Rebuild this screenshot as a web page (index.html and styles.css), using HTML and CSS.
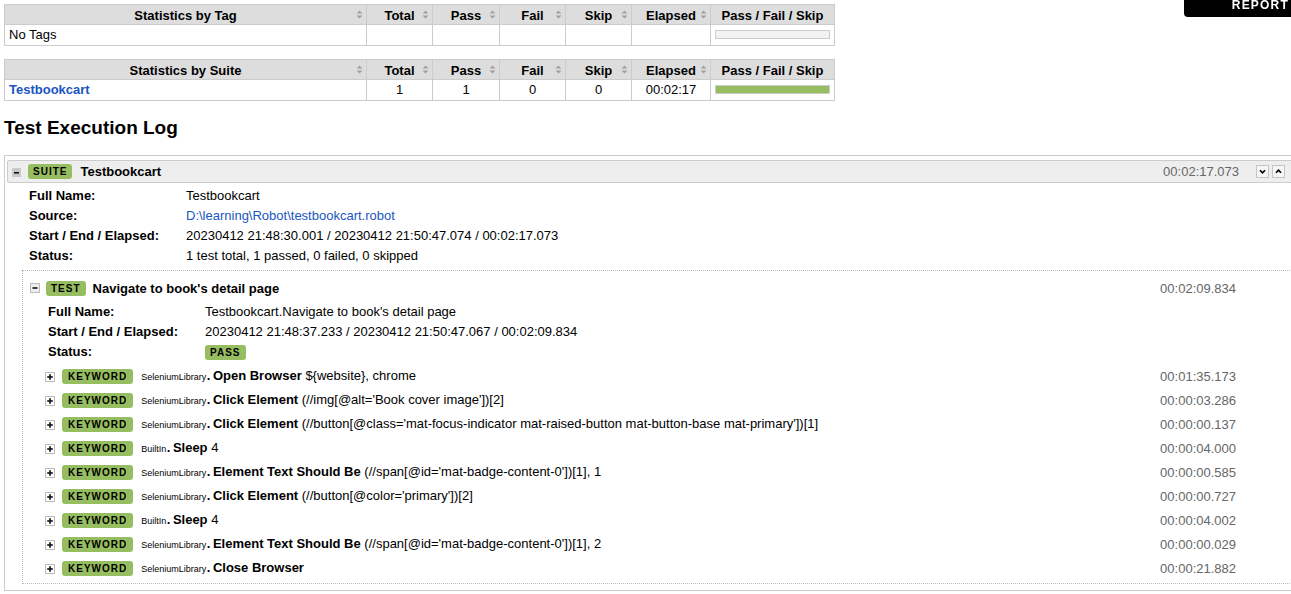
FILE: index.html
```html
<!DOCTYPE html>
<html>
<head>
<meta charset="utf-8">
<title>Testbookcart Log</title>
<link rel="stylesheet" href="styles.css">
</head>
<body>
<div class="report-link"><span>Report</span></div>

<table class="statistics">
  <colgroup>
    <col class="c-name"><col class="c-total"><col class="c-pass"><col class="c-fail"><col class="c-skip"><col class="c-elapsed"><col class="c-graph">
  </colgroup>
  <thead>
    <tr>
      <th>Statistics by Tag<svg class="sort" viewBox="0 0 7 9"><path d="M0.5 3.5L3.5 0.5L6.5 3.5Z M0.5 5.5H6.5L3.5 8.5Z"/></svg></th>
      <th>Total<svg class="sort" viewBox="0 0 7 9"><path d="M0.5 3.5L3.5 0.5L6.5 3.5Z M0.5 5.5H6.5L3.5 8.5Z"/></svg></th>
      <th>Pass<svg class="sort" viewBox="0 0 7 9"><path d="M0.5 3.5L3.5 0.5L6.5 3.5Z M0.5 5.5H6.5L3.5 8.5Z"/></svg></th>
      <th>Fail<svg class="sort" viewBox="0 0 7 9"><path d="M0.5 3.5L3.5 0.5L6.5 3.5Z M0.5 5.5H6.5L3.5 8.5Z"/></svg></th>
      <th>Skip<svg class="sort" viewBox="0 0 7 9"><path d="M0.5 3.5L3.5 0.5L6.5 3.5Z M0.5 5.5H6.5L3.5 8.5Z"/></svg></th>
      <th>Elapsed<svg class="sort" viewBox="0 0 7 9"><path d="M0.5 3.5L3.5 0.5L6.5 3.5Z M0.5 5.5H6.5L3.5 8.5Z"/></svg></th>
      <th>Pass / Fail / Skip</th>
    </tr>
  </thead>
  <tbody>
    <tr>
      <td class="stat-name">No Tags</td>
      <td></td><td></td><td></td><td></td><td></td>
      <td><div class="graph"></div></td>
    </tr>
  </tbody>
</table>

<table class="statistics">
  <colgroup>
    <col class="c-name"><col class="c-total"><col class="c-pass"><col class="c-fail"><col class="c-skip"><col class="c-elapsed"><col class="c-graph">
  </colgroup>
  <thead>
    <tr>
      <th>Statistics by Suite<svg class="sort" viewBox="0 0 7 9"><path d="M0.5 3.5L3.5 0.5L6.5 3.5Z M0.5 5.5H6.5L3.5 8.5Z"/></svg></th>
      <th>Total<svg class="sort" viewBox="0 0 7 9"><path d="M0.5 3.5L3.5 0.5L6.5 3.5Z M0.5 5.5H6.5L3.5 8.5Z"/></svg></th>
      <th>Pass<svg class="sort" viewBox="0 0 7 9"><path d="M0.5 3.5L3.5 0.5L6.5 3.5Z M0.5 5.5H6.5L3.5 8.5Z"/></svg></th>
      <th>Fail<svg class="sort" viewBox="0 0 7 9"><path d="M0.5 3.5L3.5 0.5L6.5 3.5Z M0.5 5.5H6.5L3.5 8.5Z"/></svg></th>
      <th>Skip<svg class="sort" viewBox="0 0 7 9"><path d="M0.5 3.5L3.5 0.5L6.5 3.5Z M0.5 5.5H6.5L3.5 8.5Z"/></svg></th>
      <th>Elapsed<svg class="sort" viewBox="0 0 7 9"><path d="M0.5 3.5L3.5 0.5L6.5 3.5Z M0.5 5.5H6.5L3.5 8.5Z"/></svg></th>
      <th>Pass / Fail / Skip</th>
    </tr>
  </thead>
  <tbody>
    <tr>
      <td class="stat-name"><a href="#s1" class="stat-link">Testbookcart</a></td>
      <td>1</td><td>1</td><td>0</td><td>0</td><td>00:02:17</td>
      <td><div class="graph"><div class="pass-bar"></div></div></td>
    </tr>
  </tbody>
</table>

<h2 class="log-title">Test Execution Log</h2>

<div class="suite">
  <div class="suite-header">
    <svg class="toggle toggle-suite" viewBox="0 0 9 9"><rect x="0" y="0" width="9" height="9" fill="#c9c9c9"/><rect x="2" y="4" width="5" height="1.6" fill="#111"/></svg>
    <span class="label">SUITE</span>
    <span class="el-name">Testbookcart</span>
    <span class="elapsed">00:02:17.073</span>
    <span class="hbtn hbtn-first"><svg viewBox="0 0 13 13"><polyline points="3.5,5 6.5,8 9.5,5" fill="none" stroke="#000" stroke-width="2"/></svg></span>
    <span class="hbtn"><svg viewBox="0 0 13 13"><polyline points="3.5,8 6.5,5 9.5,8" fill="none" stroke="#000" stroke-width="2"/></svg></span>
  </div>
  <div class="meta suite-meta">
    <div class="meta-row"><span class="meta-key">Full Name:</span><span>Testbookcart</span></div>
    <div class="meta-row"><span class="meta-key">Source:</span><a href="#src">D:\learning\Robot\testbookcart.robot</a></div>
    <div class="meta-row"><span class="meta-key">Start / End / Elapsed:</span><span>20230412 21:48:30.001 / 20230412 21:50:47.074 / 00:02:17.073</span></div>
    <div class="meta-row"><span class="meta-key">Status:</span><span>1 test total, 1 passed, 0 failed, 0 skipped</span></div>
  </div>

  <div class="test">
    <div class="test-header">
      <svg class="toggle" viewBox="0 0 10 10"><rect x="0.5" y="0.5" width="9" height="9" fill="#eee" stroke="#bbb"/><rect x="2.5" y="4.2" width="5" height="1.6" fill="#111"/></svg>
      <span class="label label-test">TEST</span>
      <span class="el-name">Navigate to book's detail page</span>
      <span class="elapsed">00:02:09.834</span>
    </div>
    <div class="meta test-meta">
      <div class="meta-row"><span class="meta-key">Full Name:</span><span>Testbookcart.Navigate to book's detail page</span></div>
      <div class="meta-row"><span class="meta-key">Start / End / Elapsed:</span><span>20230412 21:48:37.233 / 20230412 21:50:47.067 / 00:02:09.834</span></div>
      <div class="meta-row"><span class="meta-key">Status:</span><span class="label label-status">PASS</span></div>
    </div>

    <div class="keywords">
      <div class="kw">
        <svg class="toggle" viewBox="0 0 10 10"><rect x="0.5" y="0.5" width="9" height="9" fill="#fff" stroke="#bbb"/><rect x="2.2" y="4.2" width="5.6" height="1.6" fill="#111"/><rect x="4.2" y="2.2" width="1.6" height="5.6" fill="#111"/></svg>
        <span class="label label-kw">KEYWORD</span>
        <span class="kw-text"><span class="lib">SeleniumLibrary</span><span class="dot">.</span><span class="kw-name">Open Browser</span> <span>${website}, chrome</span></span>
        <span class="elapsed">00:01:35.173</span>
      </div>
      <div class="kw">
        <svg class="toggle" viewBox="0 0 10 10"><rect x="0.5" y="0.5" width="9" height="9" fill="#fff" stroke="#bbb"/><rect x="2.2" y="4.2" width="5.6" height="1.6" fill="#111"/><rect x="4.2" y="2.2" width="1.6" height="5.6" fill="#111"/></svg>
        <span class="label label-kw">KEYWORD</span>
        <span class="kw-text"><span class="lib">SeleniumLibrary</span><span class="dot">.</span><span class="kw-name">Click Element</span> <span>(//img[@alt='Book cover image'])[2]</span></span>
        <span class="elapsed">00:00:03.286</span>
      </div>
      <div class="kw">
        <svg class="toggle" viewBox="0 0 10 10"><rect x="0.5" y="0.5" width="9" height="9" fill="#fff" stroke="#bbb"/><rect x="2.2" y="4.2" width="5.6" height="1.6" fill="#111"/><rect x="4.2" y="2.2" width="1.6" height="5.6" fill="#111"/></svg>
        <span class="label label-kw">KEYWORD</span>
        <span class="kw-text"><span class="lib">SeleniumLibrary</span><span class="dot">.</span><span class="kw-name">Click Element</span> <span>(//button[@class='mat-focus-indicator mat-raised-button mat-button-base mat-primary'])[1]</span></span>
        <span class="elapsed">00:00:00.137</span>
      </div>
      <div class="kw">
        <svg class="toggle" viewBox="0 0 10 10"><rect x="0.5" y="0.5" width="9" height="9" fill="#fff" stroke="#bbb"/><rect x="2.2" y="4.2" width="5.6" height="1.6" fill="#111"/><rect x="4.2" y="2.2" width="1.6" height="5.6" fill="#111"/></svg>
        <span class="label label-kw">KEYWORD</span>
        <span class="kw-text"><span class="lib">BuiltIn</span><span class="dot">.</span><span class="kw-name">Sleep</span> <span>4</span></span>
        <span class="elapsed">00:00:04.000</span>
      </div>
      <div class="kw">
        <svg class="toggle" viewBox="0 0 10 10"><rect x="0.5" y="0.5" width="9" height="9" fill="#fff" stroke="#bbb"/><rect x="2.2" y="4.2" width="5.6" height="1.6" fill="#111"/><rect x="4.2" y="2.2" width="1.6" height="5.6" fill="#111"/></svg>
        <span class="label label-kw">KEYWORD</span>
        <span class="kw-text"><span class="lib">SeleniumLibrary</span><span class="dot">.</span><span class="kw-name">Element Text Should Be</span> <span>(//span[@id='mat-badge-content-0'])[1], 1</span></span>
        <span class="elapsed">00:00:00.585</span>
      </div>
      <div class="kw">
        <svg class="toggle" viewBox="0 0 10 10"><rect x="0.5" y="0.5" width="9" height="9" fill="#fff" stroke="#bbb"/><rect x="2.2" y="4.2" width="5.6" height="1.6" fill="#111"/><rect x="4.2" y="2.2" width="1.6" height="5.6" fill="#111"/></svg>
        <span class="label label-kw">KEYWORD</span>
        <span class="kw-text"><span class="lib">SeleniumLibrary</span><span class="dot">.</span><span class="kw-name">Click Element</span> <span>(//button[@color='primary'])[2]</span></span>
        <span class="elapsed">00:00:00.727</span>
      </div>
      <div class="kw">
        <svg class="toggle" viewBox="0 0 10 10"><rect x="0.5" y="0.5" width="9" height="9" fill="#fff" stroke="#bbb"/><rect x="2.2" y="4.2" width="5.6" height="1.6" fill="#111"/><rect x="4.2" y="2.2" width="1.6" height="5.6" fill="#111"/></svg>
        <span class="label label-kw">KEYWORD</span>
        <span class="kw-text"><span class="lib">BuiltIn</span><span class="dot">.</span><span class="kw-name">Sleep</span> <span>4</span></span>
        <span class="elapsed">00:00:04.002</span>
      </div>
      <div class="kw">
        <svg class="toggle" viewBox="0 0 10 10"><rect x="0.5" y="0.5" width="9" height="9" fill="#fff" stroke="#bbb"/><rect x="2.2" y="4.2" width="5.6" height="1.6" fill="#111"/><rect x="4.2" y="2.2" width="1.6" height="5.6" fill="#111"/></svg>
        <span class="label label-kw">KEYWORD</span>
        <span class="kw-text"><span class="lib">SeleniumLibrary</span><span class="dot">.</span><span class="kw-name">Element Text Should Be</span> <span>(//span[@id='mat-badge-content-0'])[1], 2</span></span>
        <span class="elapsed">00:00:00.029</span>
      </div>
      <div class="kw">
        <svg class="toggle" viewBox="0 0 10 10"><rect x="0.5" y="0.5" width="9" height="9" fill="#fff" stroke="#bbb"/><rect x="2.2" y="4.2" width="5.6" height="1.6" fill="#111"/><rect x="4.2" y="2.2" width="1.6" height="5.6" fill="#111"/></svg>
        <span class="label label-kw">KEYWORD</span>
        <span class="kw-text"><span class="lib">SeleniumLibrary</span><span class="dot">.</span><span class="kw-name">Close Browser</span></span>
        <span class="elapsed">00:00:21.882</span>
      </div>
    </div>
  </div>
</div>
</body>
</html>
```

FILE: styles.css
```css
html {
  overflow: hidden;
}

body {
  margin: 0;
  padding: 4px;
  font-family: "Liberation Sans", Arial, Helvetica, sans-serif;
  font-size: 13px;
  color: #000;
  background: #fff;
}

a {
  color: #1a56c0;
  text-decoration: none;
}

/* Report link (fixed overlay at top right) */
.report-link {
  position: fixed;
  top: 0;
  right: 0;
  width: 107px;
  height: 17px;
  background: #000;
  border-bottom-left-radius: 4px;
  overflow: hidden;
  text-align: right;
}

.report-link span {
  display: block;
  margin-top: -1px;
  padding-right: 2px;
  color: #fff;
  font-size: 12px;
  line-height: 12px;
  font-weight: bold;
  letter-spacing: 1.2px;
  text-transform: uppercase;
}

/* Statistics tables */
.statistics {
  border-collapse: collapse;
  table-layout: fixed;
  width: 831px;
  margin: 0 0 13px;
  font-size: 13px;
}

.c-name { width: 362px; }
.c-total { width: 66px; }
.c-pass { width: 67px; }
.c-fail { width: 66px; }
.c-skip { width: 66px; }
.c-elapsed { width: 79px; }
.c-graph { width: 124px; }

.statistics th,
.statistics td {
  border: 1px solid #ccc;
}

.statistics th {
  position: relative;
  background: #ddd;
  font-weight: bold;
  line-height: 15px;
  padding: 3px 4px 1px;
  text-align: center;
  white-space: nowrap;
}

.statistics td {
  line-height: 15px;
  padding: 2px 4px 3px;
  text-align: center;
  vertical-align: middle;
  white-space: nowrap;
}

.statistics td.stat-name {
  text-align: left;
}

.stat-link {
  font-weight: bold;
}

.sort {
  position: absolute;
  right: 3px;
  top: 5px;
  width: 7px;
  height: 9px;
  fill: #a0a0a0;
}

.graph {
  height: 7px;
  border: 1px solid #ccc;
  background: #f2f2f2;
}

.pass-bar {
  height: 100%;
  background: #97bd61;
}

/* Log */
.log-title {
  margin: 16px 0 16px;
  font-size: 19px;
  line-height: 22px;
  font-weight: bold;
}

.suite {
  width: 1293px;
  box-sizing: border-box;
  border: 1px solid #ccc;
  padding: 4px 2px 6px;
}

.suite-header {
  display: flex;
  align-items: center;
  height: 23px;
  box-sizing: border-box;
  border: 1px solid #ccc;
  border-radius: 2px;
  background: #eee;
  padding: 0 8px 0 4px;
  font-weight: bold;
  line-height: 15px;
}

.toggle {
  flex: none;
  width: 10px;
  height: 10px;
  display: block;
}

.toggle-suite {
  width: 9px;
  height: 9px;
  margin-top: 1px;
}

.label {
  flex: none;
  display: inline-block;
  padding: 2px 5px;
  font-size: 10px;
  line-height: 11px;
  font-weight: bold;
  letter-spacing: 1px;
  color: #000;
  background: #97bd61;
  border-radius: 3px;
  white-space: nowrap;
}

.suite-header .label {
  margin-left: 7px;
}

.el-name {
  margin-left: 8px;
  font-weight: bold;
  white-space: nowrap;
}

.elapsed {
  margin-left: auto;
  color: #666;
  font-weight: normal;
  white-space: nowrap;
}

.hbtn {
  flex: none;
  display: block;
  width: 13px;
  height: 13px;
  box-sizing: border-box;
  border: 1px solid #c4c4c4;
  background: #f6f6f6;
  margin-left: 3px;
}

.hbtn svg {
  display: block;
  width: 11px;
  height: 11px;
}

.hbtn-first {
  margin-left: 17px;
}

.meta-row {
  display: flex;
  height: 20px;
  line-height: 20px;
  white-space: nowrap;
}

.meta-key {
  flex: none;
  width: 157px;
  font-weight: bold;
}

.suite-meta {
  margin-top: 3px;
  padding-left: 22px;
}

.label-status {
  align-self: center;
}

/* Test */
.test {
  margin: 4px 0 0 15px;
  border: 1px dotted #bbb;
  padding: 7px 57px 3px 7px;
}

.test-header {
  display: flex;
  align-items: center;
  height: 20px;
  line-height: 15px;
}

.label-test {
  margin-left: 6px;
}

.test-header .el-name {
  margin-left: 7px;
}

.test-meta {
  margin-top: 4px;
  padding-left: 18px;
}

.keywords {
  margin-top: 2px;
  padding-left: 15px;
}

.kw {
  display: flex;
  align-items: center;
  height: 24px;
  line-height: 15px;
}

.kw .toggle {
  margin-top: 1px;
}

.label-kw {
  margin-left: 7px;
  padding: 2px 6px;
}

.kw-text {
  margin-left: 8px;
  white-space: nowrap;
}

.lib {
  font-size: 9px;
}

.dot {
  font-weight: bold;
  margin: 0 2.5px 0 0.5px;
}

.kw-name {
  font-weight: bold;
}
```
